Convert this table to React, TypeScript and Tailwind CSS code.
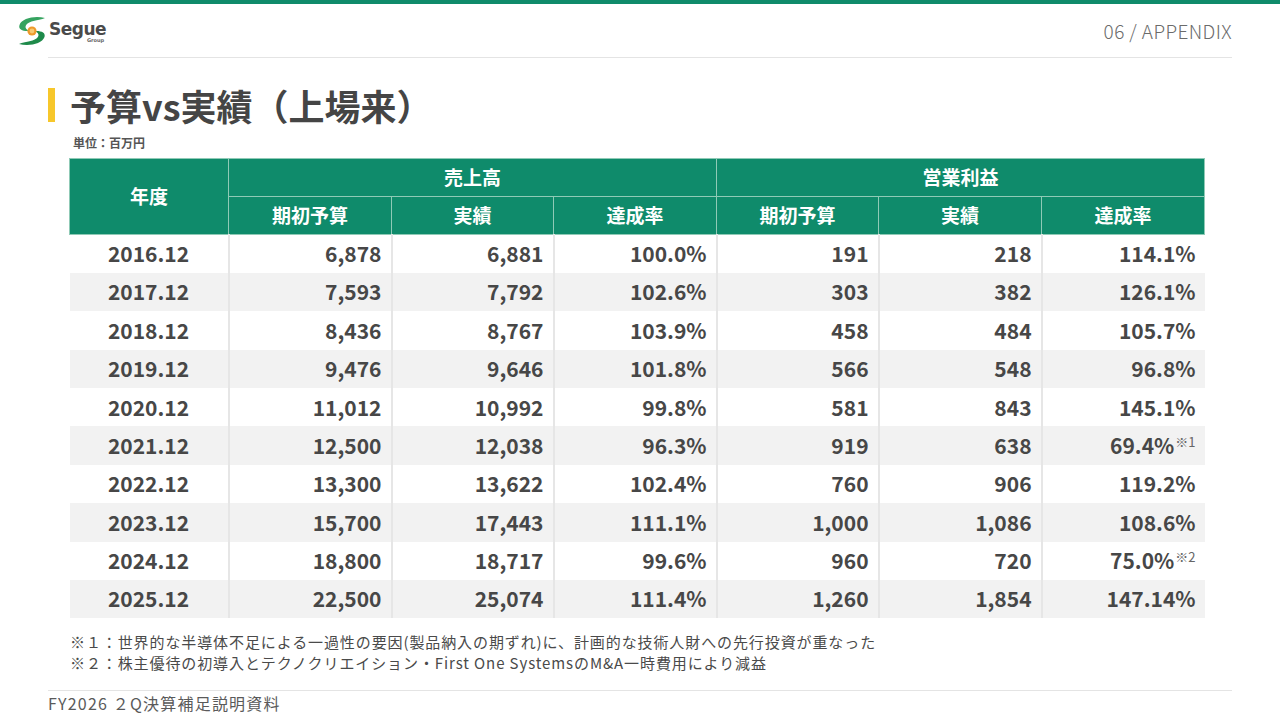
import React from 'react';

const FONT = '"Noto Sans CJK JP", "Noto Sans", sans-serif';

type Row = {
  year: string;
  sales: [string, string, string];
  op: [string, string, string];
  note?: string;
};

const ROWS: Row[] = [
  { year: '2016.12', sales: ['6,878', '6,881', '100.0%'], op: ['191', '218', '114.1%'] },
  { year: '2017.12', sales: ['7,593', '7,792', '102.6%'], op: ['303', '382', '126.1%'] },
  { year: '2018.12', sales: ['8,436', '8,767', '103.9%'], op: ['458', '484', '105.7%'] },
  { year: '2019.12', sales: ['9,476', '9,646', '101.8%'], op: ['566', '548', '96.8%'] },
  { year: '2020.12', sales: ['11,012', '10,992', '99.8%'], op: ['581', '843', '145.1%'] },
  { year: '2021.12', sales: ['12,500', '12,038', '96.3%'], op: ['919', '638', '69.4%'], note: '1' },
  { year: '2022.12', sales: ['13,300', '13,622', '102.4%'], op: ['760', '906', '119.2%'] },
  { year: '2023.12', sales: ['15,700', '17,443', '111.1%'], op: ['1,000', '1,086', '108.6%'] },
  { year: '2024.12', sales: ['18,800', '18,717', '99.6%'], op: ['960', '720', '75.0%'], note: '2' },
  { year: '2025.12', sales: ['22,500', '25,074', '111.4%'], op: ['1,260', '1,854', '147.14%'] },
];

function Logo() {
  return (
    <div className="flex items-center gap-[2px]">
      <svg width="30" height="32" viewBox="0 0 30 32">
        <path d="M28 3 C18 0.5 5 3 2.5 10 C1 14.5 6 16.5 12.5 16 C6 13.5 8 8.5 14.5 6.5 C20 5 25 4.5 28 3 Z" fill="#35a35f" />
        <path d="M2 29 C12 31.5 25 29 27.5 22 C29 17.5 24 15.5 17.5 16 C24 18.5 22 23.5 15.5 25.5 C10 27 5 27.5 2 29 Z" fill="#1e8a4a" />
        <circle cx="15" cy="16" r="4.6" fill="#ee9a2c" />
        <circle cx="15" cy="16" r="2.4" fill="#f8c870" />
      </svg>
      <div className="flex flex-col leading-none mt-[2px]">
        <span className="text-[17px] font-black text-[#4a4a4a] tracking-[-0.5px] leading-[16px]" style={{ fontFamily: '"DejaVu Sans", sans-serif' }}>
          Segue
        </span>
        <span className="self-end text-[5px] font-bold text-[#666] leading-[6px] pr-[2px]" style={{ fontFamily: '"DejaVu Sans", sans-serif' }}>
          Group
        </span>
      </div>
    </div>
  );
}

export default function App() {
  const th = 'border border-[#8fcab6] text-white font-bold text-[19px] text-center';
  const td = 'border-l-2 border-[#e6e6e6] text-right pr-[9px] font-bold text-[21px] text-[#474747]';

  return (
    <div className="w-[1280px] h-[720px] bg-white overflow-hidden flex flex-col" style={{ fontFamily: FONT }}>
      <div className="h-[4px] bg-[#0f8b6b]" />

      {/* header */}
      <div className="flex items-center justify-between pl-[17px] pr-[48px] h-[53px]">
        <Logo />
        <span className="text-[19px] text-[#6b6b6b] font-light tracking-[0.4px] mt-[2px]">06 / APPENDIX</span>
      </div>
      <div className="mx-[48px] h-px bg-[#e4e4e4]" />

      {/* title */}
      <div className="flex items-center gap-[15px] pl-[48px] mt-[27px] h-[40px]">
        <div className="w-[7px] h-[34px] bg-[#f7c72b]" />
        <h1 className="text-[36px] font-bold text-[#454545] leading-none">予算vs実績（上場来）</h1>
      </div>
      <div className="pl-[73px] mt-[12px] text-[12px] font-bold text-[#555] leading-none">単位：百万円</div>

      {/* table */}
      <div className="pl-[69px] mt-[9px]">
        <table className="border-collapse w-[1135px] table-fixed">
          <colgroup>
            <col className="w-[159px]" />
            <col className="w-[163px]" />
            <col className="w-[162px]" />
            <col className="w-[163px]" />
            <col className="w-[162px]" />
            <col className="w-[163px]" />
            <col className="w-[163px]" />
          </colgroup>
          <thead className="bg-[#0f8b6b]">
            <tr className="h-[38px]">
              <th rowSpan={2} className={th}>年度</th>
              <th colSpan={3} className={th}>売上高</th>
              <th colSpan={3} className={th}>営業利益</th>
            </tr>
            <tr className="h-[38px]">
              <th className={th}>期初予算</th>
              <th className={th}>実績</th>
              <th className={th}>達成率</th>
              <th className={th}>期初予算</th>
              <th className={th}>実績</th>
              <th className={th}>達成率</th>
            </tr>
          </thead>
          <tbody>
            {ROWS.map((r, i) => (
              <tr key={r.year} className={`h-[38.4px] ${i % 2 === 1 ? 'bg-[#f2f2f2]' : 'bg-white'}`}>
                <td className="text-center font-bold text-[21px] text-[#474747]">{r.year}</td>
                {r.sales.map((v, j) => (
                  <td key={'s' + j} className={td}>{v}</td>
                ))}
                {r.op.map((v, j) => (
                  <td key={'o' + j} className={td}>
                    {v}
                    {j === 2 && r.note && (
                      <span className="relative -top-[7px] text-[13px] font-normal text-[#666] whitespace-nowrap pl-[1px]">
                        ※{r.note}
                      </span>
                    )}
                  </td>
                ))}
              </tr>
            ))}
          </tbody>
        </table>
      </div>

      {/* notes */}
      <div className="pl-[70px] mt-[13px] text-[15px] tracking-[0.9px] text-[#4a4a4a] leading-[21px]">
        <p>※１：世界的な半導体不足による一過性の要因(製品納入の期ずれ)に、計画的な技術人財への先行投資が重なった</p>
        <p>※２：株主優待の初導入とテクノクリエイション・First One SystemsのM&amp;A一時費用により減益</p>
      </div>

      <div className="mx-[48px] mt-[17px] h-px bg-[#e4e4e4]" />
      <div className="pl-[48px] mt-[1px] text-[16px] tracking-[1.2px] text-[#5a5a5a] leading-[22px]">FY2026 ２Q決算補足説明資料</div>
    </div>
  );
}
